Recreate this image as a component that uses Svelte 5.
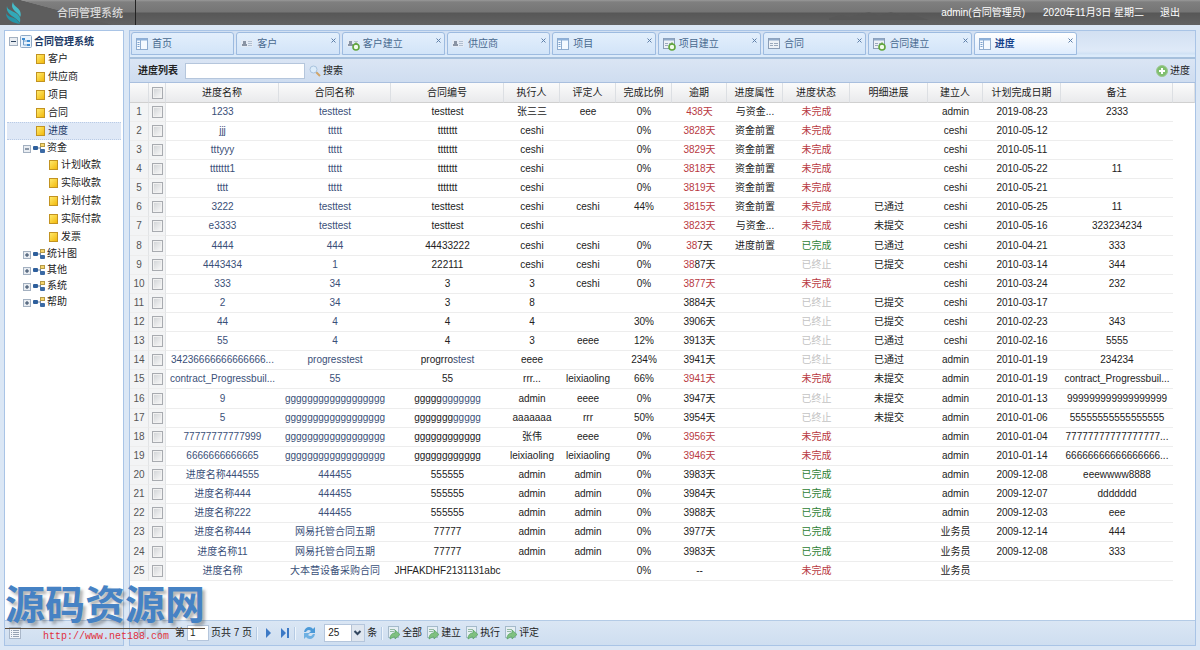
<script>
  const tabs = [
    { label: '首页', icon: 'pane', fixed: true },
    { label: '客户', icon: 'card' },
    { label: '客户建立', icon: 'cardAdd' },
    { label: '供应商', icon: 'card' },
    { label: '项目', icon: 'pane' },
    { label: '项目建立', icon: 'formAdd' },
    { label: '合同', icon: 'form' },
    { label: '合同建立', icon: 'formAdd' },
    { label: '进度', icon: 'pane', active: true }
  ];

  const tree = [
    { label: '客户', kind: 'leaf', depth: 1 },
    { label: '供应商', kind: 'leaf', depth: 1 },
    { label: '项目', kind: 'leaf', depth: 1 },
    { label: '合同', kind: 'leaf', depth: 1 },
    { label: '进度', kind: 'leaf', depth: 1, selected: true },
    { label: '资金', kind: 'folder', open: true },
    { label: '计划收款', kind: 'leaf', depth: 2 },
    { label: '实际收款', kind: 'leaf', depth: 2 },
    { label: '计划付款', kind: 'leaf', depth: 2 },
    { label: '实际付款', kind: 'leaf', depth: 2 },
    { label: '发票', kind: 'leaf', depth: 2 },
    { label: '统计图', kind: 'folder' },
    { label: '其他', kind: 'folder' },
    { label: '系统', kind: 'folder' },
    { label: '帮助', kind: 'folder' }
  ];

  const columns = [
    ['进度名称', 113], ['合同名称', 112], ['合同编号', 113], ['执行人', 56],
    ['评定人', 56], ['完成比例', 56], ['逾期', 55], ['进度属性', 56],
    ['进度状态', 67], ['明细进展', 78], ['建立人', 55], ['计划完成日期', 78], ['备注', 112]
  ];

  const W = '未完成', D = '已完成', S = '已终止';
  const g19 = 'g'.repeat(18);
  // A cell is a string, or a list of [text, colour class] pieces.
  const rows = [
    ['1233', 'testtest', 'testtest', '张三三', 'eee', '0%', '438天', '与资金...', W, '', 'admin', '2019-08-23', '2333'],
    ['jjj', 'ttttt', 'ttttttt', 'ceshi', '', '0%', '3828天', '资金前置', W, '', 'ceshi', '2010-05-12', ''],
    ['tttyyy', 'ttttt', 'ttttttt', 'ceshi', '', '0%', '3829天', '资金前置', W, '', 'ceshi', '2010-05-11', ''],
    ['ttttttt1', 'ttttt', 'ttttttt', 'ceshi', '', '0%', '3818天', '资金前置', W, '', 'ceshi', '2010-05-22', '11'],
    ['tttt', 'ttttt', 'ttttttt', 'ceshi', '', '0%', '3819天', '资金前置', W, '', 'ceshi', '2010-05-21', ''],
    ['3222', 'testtest', 'testtest', 'ceshi', 'ceshi', '44%', '3815天', '资金前置', W, '已通过', 'ceshi', '2010-05-25', '11'],
    ['e3333', 'testtest', 'testtest', 'ceshi', '', '', '3823天', '与资金...', W, '未提交', 'ceshi', '2010-05-16', '323234234'],
    ['4444', '444', '44433222', 'ceshi', 'ceshi', '0%', [['38', 'late'], ['7天', '']], '进度前置', D, '已通过', 'ceshi', '2010-04-21', '333'],
    ['4443434', '1', '222111', 'ceshi', 'ceshi', '0%', [['38', 'late'], ['87天', '']], '', S, '已提交', 'ceshi', '2010-03-14', '344'],
    ['333', '34', '3', '3', 'ceshi', '0%', '3877天', '', W, '', 'ceshi', '2010-03-24', '232'],
    ['2', '34', '3', '8', '', '', '3884天', '', S, '已提交', 'ceshi', '2010-03-17', ''],
    ['44', '4', '4', '4', '', '30%', '3906天', '', S, '已提交', 'ceshi', '2010-02-23', '343'],
    ['55', '4', '4', '3', 'eeee', '12%', '3913天', '', S, '已通过', 'ceshi', '2010-02-16', '5555'],
    ['34236666666666666...', 'progresstest', [['progrro', ''], ['stest', 'link']], 'eeee', '', '234%', '3941天', '', S, '已通过', 'admin', '2010-01-19', '234234'],
    ['contract_Progressbuil...', '55', '55', 'rrr...', 'leixiaoling', '66%', '3941天', '', W, '未提交', 'admin', '2010-01-19', 'contract_Progressbuil...'],
    ['9', g19, [['ggggg', ''], ['ggggggg', 'link']], 'admin', 'eeee', '0%', '3947天', '', S, '未提交', 'admin', '2010-01-13', '9'.repeat(18)],
    ['5', g19, [['ggggggg', ''], ['ggggg', 'link']], 'aaaaaaa', 'rrr', '50%', '3954天', '', S, '未提交', 'admin', '2010-01-06', '5'.repeat(17)],
    ['77777777777999', g19, 'gggggggggggg', '张伟', 'eeee', '0%', '3956天', '', W, '', 'admin', '2010-01-04', '7'.repeat(17) + '...'],
    ['6666666666665', g19, 'gggggggggggg', 'leixiaoling', 'leixiaoling', '0%', '3946天', '', W, '', 'admin', '2010-01-14', '6'.repeat(17) + '...'],
    ['进度名称444555', '444455', '555555', 'admin', 'admin', '0%', '3983天', '', D, '', 'admin', '2009-12-08', 'eeewwww8888'],
    ['进度名称444', '444455', '555555', 'admin', 'admin', '0%', '3984天', '', D, '', 'admin', '2009-12-07', 'ddddddd'],
    ['进度名称222', '444455', '555555', 'admin', 'admin', '0%', '3988天', '', D, '', 'admin', '2009-12-03', 'eee'],
    ['进度名称444', '网易托管合同五期', '77777', 'admin', 'admin', '0%', '3977天', '', D, '', '业务员', '2009-12-14', '444'],
    ['进度名称11', '网易托管合同五期', '77777', 'admin', 'admin', '0%', '3983天', '', D, '', '业务员', '2009-12-08', '333'],
    ['进度名称', '大本营设备采购合同', 'JHFAKDHF2131131abc', '', '', '0%', '--', '', W, '', '业务员', '', '']
  ];

  function tone(row, i) {
    if (i < 2) return 'link';
    if (i === 8) return row[8] === W ? 'late' : row[8] === D ? 'done' : 'stopped';
    if (i === 6 && row[8] === W && row[6] !== '--') return 'late';
    return '';
  }
</script>

{#snippet tabIcon(kind)}
  <svg width="14" height="14" viewBox="0 0 14 14" aria-hidden="true">
    {#if kind === 'pane'}
      <rect x="1.500" y="1.500" width="11" height="11" fill="#f4f9ff" stroke="#8faccf" />
      <path d="M2 2.500h10" stroke="#8db1da" stroke-width="2" />
      <path d="M5.500 3v9" stroke="#8faccf" />
      <path d="M2.500 5.500h2M2.500 7.500h2M2.500 9.500h2" stroke="#7ba0cc" />
    {:else if kind === 'card' || kind === 'cardAdd'}
      <rect x="1" y="3" width="12" height="7" fill="#e4ebf5" />
      <path d="M3 4h3v3H3zM2 7h5v2H2z" fill="#8a94a4" />
      <path d="M8 4.500h4M8 6.500h4M8 8.500h4" stroke="#b1bfd0" />
    {:else}
      <rect x="1.500" y="1.500" width="11" height="10" fill="#edf1f6" stroke="#8b9db5" />
      <path d="M2 2.500h10" stroke="#8fa9c9" stroke-width="2" />
      <path d="M3 6.500h3M7 6.500h4M3 8.500h3M7 8.500h4" stroke="#9aa9bc" />
    {/if}
    {#if kind.endsWith('Add')}
      <circle cx="10" cy="10" r="3" fill="#f2fbeb" stroke="#61a53c" stroke-width="1.600" />
      <path d="M10 5.500v2" stroke="#61a53c" stroke-width="1.500" />
    {/if}
  </svg>
{/snippet}

{#snippet sheetIcon()}
  <svg width="14" height="14" viewBox="0 0 14 14" aria-hidden="true">
    <rect x="1.500" y=".5" width="10" height="11" fill="#e6eff4" stroke="#a5bacb" />
    <path d="M3 3.500h5M3 5.500h4" stroke="#93b8a2" />
    <path d="M3 13c0-5 3-6 5-6V4l5 4.500L8 13v-2c-2 0-3 1-5 2z" fill="#7fc080" stroke="#4f9a5b" stroke-width=".6" />
  </svg>
{/snippet}

<div class="app">
  <header>
    <div class="brand">
      <svg class="logo" width="18" height="22" viewBox="0 0 18 22" aria-hidden="true">
        <path d="M8 0c0 4 5 5 7 9 1 3 1 5 0 6C14 10 4 8 8 0z" fill="#45bcc9" />
        <path d="M2 4c0 5 9 5 12 10 2 3 1 5 1 7C12 15 0 13 2 4z" fill="#31a9b8" />
        <path d="M1 11c1 4 8 4 11 7l3 4C8 21 1 18 1 11z" fill="#2495a8" />
      </svg>
      <span>合同管理系统</span>
    </div>
    <svg class="ridge" width="100" height="9" viewBox="0 0 100 9" aria-hidden="true">
      <path d="M0 7l12-3 8 2L40 1l10 4 12-4 10 4 10-2 18 6H0z" fill="#575757" opacity=".7" />
    </svg>
    <span class="user">admin(合同管理员)</span>
    <span class="date">2020年11月3日 星期二</span>
    <a href="#logout">退出</a>
  </header>

  <div class="workspace">
    <aside>
      <nav aria-label="合同管理系统">
        <div class="node root">
          <svg width="9" height="9" viewBox="0 0 9 9" aria-hidden="true"><rect x=".5" y=".5" width="8" height="8" fill="#e9edf2" stroke="#a3b0c0" /><path d="M2 4.500h5" stroke="#2f4560" /></svg>
          <svg width="12" height="13" viewBox="0 0 12 13" aria-hidden="true"><rect x=".5" y=".5" width="11" height="12" rx="1" fill="#eaf3fc" stroke="#8fa9c6" /><path d="M2 3h3v2H2zM7 5h3v2H7zM7 9h3v2H7z" fill="#3b8ad0" /><path d="M3.500 5v5H7M3.500 6H7" fill="none" stroke="#6f9cc9" /></svg>
          <a href="#root">合同管理系统</a>
        </div>
        {#each tree as item}
          <div class="node {item.kind} d{item.depth ?? 0}" class:selected={item.selected}>
            {#if item.kind === 'leaf'}
              <i class="file"></i>
            {:else}
              <svg width="8" height="9" viewBox="0 0 8 9" aria-hidden="true"><rect x=".5" y="1.500" width="7" height="7" fill="#e9edf2" stroke="#a3b0c0" /><path d={item.open ? 'M2 5h4' : 'M2 5h4M4 3v4'} stroke="#2f4560" /></svg>
              <svg width="12" height="11" viewBox="0 0 12 11" aria-hidden="true"><path d="M4 5h3M7.500 2.500v6" stroke="#7288a2" fill="none" /><rect x="0" y="3" width="5" height="4" rx="1" fill="#2e5f9c" /><rect x="7.500" y=".5" width="4" height="3" fill="#f7d66e" stroke="#b59a46" /><rect x="7" y="6" width="5" height="4" rx="1" fill="#3b6aa5" /></svg>
            {/if}
            <a href="#{item.label}">{item.label}</a>
          </div>
        {/each}
      </nav>
      <div class="bar">
        <svg width="12" height="12" viewBox="0 0 12 12" aria-hidden="true"><rect x=".5" y=".5" width="11" height="11" fill="#f3f6fa" stroke="#a9b7c9" /><path d="M2 3.500h1M4 3.500h6M2 5.500h1M4 5.500h6M2 7.500h1M4 7.500h6M2 9.500h1M4 9.500h6" stroke="#97a3b3" /></svg>
      </div>
    </aside>

    <main>
      <div class="tabstrip">
        <div class="tabs">
          {#each tabs as tab}
            <div class="tab" class:active={tab.active}>
              <button class="name">{@render tabIcon(tab.icon)}{tab.label}</button>
              {#if !tab.fixed}
                <button class="close" aria-label="关闭{tab.label}"><svg width="5" height="5" viewBox="0 0 5 5"><path d="M.5 .5l4 4M4.500 .5l-4 4" stroke="#5e7fa8" /></svg></button>
              {/if}
            </div>
          {/each}
        </div>
      </div>

      <div class="toolbar">
        <label for="search">进度列表</label>
        <input id="search" type="text" />
        <button>
          <svg width="12" height="12" viewBox="0 0 12 12" aria-hidden="true"><path d="M7 7l4 4" stroke="#d0a468" stroke-width="2" /><circle cx="4.500" cy="4.500" r="3.500" fill="#dcecfa" stroke="#a9c3de" /></svg>
          搜索
        </button>
        <button class="add">
          <svg width="12" height="12" viewBox="0 0 12 12" aria-hidden="true"><circle cx="6" cy="6" r="5.500" fill="#80bf6f" stroke="#9cc790" /><path d="M6 3v6M3 6h6" stroke="#fff" stroke-width="2" /></svg>
          进度
        </button>
      </div>

      <div class="grid">
        <table>
          <colgroup>
            <col style="width:19px" /><col style="width:17px" />
            {#each columns as [, w]}<col style="width:{w}px" />{/each}
            <col style="width:22px" />
          </colgroup>
          <thead>
            <tr>
              <th></th>
              <th><input type="checkbox" aria-label="全选" /></th>
              {#each columns as [name]}<th>{name}</th>{/each}
              <th></th>
            </tr>
          </thead>
          <tbody>
            {#each rows as row, r}
              <tr>
                <td class="num">{r + 1}</td>
                <td class="pick"><input type="checkbox" aria-label="选择第{r + 1}行" /></td>
                {#each row as cell, i}
                  <td class={tone(row, i)}>{#if Array.isArray(cell)}{#each cell as [text, c]}<span class={c}>{text}</span>{/each}{:else}{cell}{/if}</td>
                {/each}
                <td class="tail"></td>
              </tr>
            {/each}
          </tbody>
        </table>
      </div>

      <div class="bar pager">
        <button aria-label="首页" disabled><svg width="10" height="10" viewBox="0 0 10 10"><path d="M1 0h2v10H1zM9 0v10L4 5z" fill="#b5bfcd" /></svg></button>
        <button aria-label="上一页" disabled><svg width="7" height="10" viewBox="0 0 7 10"><path d="M6 0v10L1 5z" fill="#b5bfcd" /></svg></button>
        <label class="page">第<input type="text" value="1" />页共 7 页</label>
        <i class="sep"></i>
        <button aria-label="下一页"><svg width="7" height="10" viewBox="0 0 7 10"><path d="M1 0v10l5-5z" fill="#3c79c5" /></svg></button>
        <button aria-label="末页"><svg width="10" height="10" viewBox="0 0 10 10"><path d="M1 0v10l5-5zM7 0h2v10H7z" fill="#3c79c5" /></svg></button>
        <i class="sep"></i>
        <button aria-label="刷新"><svg width="13" height="12" viewBox="0 0 13 12"><path d="M1 5c1-6 7-6 9-3l2-2v6H6l2-2C6 2 4 3 3 5z" fill="#4c9ad8" /><path d="M12 7c-1 6-7 6-9 3l-2 2V6h6L5 8c2 2 4 1 5-1z" fill="#6eb0e2" /></svg></button>
        <span class="size">
          <select id="size" aria-label="每页条数"><option>25</option><option>50</option></select>
          <svg width="13" height="16" viewBox="0 0 13 16" aria-hidden="true"><rect width="13" height="16" fill="#dfe6ef" /><path d="M.5 0v16" stroke="#b5c2d3" /><path d="M3.500 6l3 3 3-3" fill="none" stroke="#33475f" stroke-width="2" /></svg>
        </span>
        <label for="size">条</label>
        <i class="sep"></i>
        <div class="filters">
          {#each ['全部', '建立', '执行', '评定'] as name}
            <button>{@render sheetIcon()}{name}</button>
          {/each}
        </div>
      </div>
    </main>
  </div>

  <div class="stamp">
    <strong>源码资源网</strong>
    <span>http://www.net188.com</span>
  </div>
</div>

<style>
  :global(body) { margin: 0; background: #dbe7f5; }
  .app {
    position: relative;
    box-sizing: border-box;
    min-height: 100vh;
    display: flex;
    flex-direction: column;
    font: 10px/14px "Liberation Sans", "Noto Sans CJK SC", sans-serif;
    color: #222;
  }
  button, input, select { font: inherit; color: inherit; }
  button { border: 0; padding: 0; background: none; display: flex; align-items: center; gap: 2px; white-space: nowrap; }
  a { color: inherit; text-decoration: none; }
  svg { flex: none; display: block; }

  header {
    display: flex;
    align-items: center;
    height: 25px;
    padding-right: 20px;
    color: #fff;
    background: linear-gradient(#999 0, #7f7f7f 2px, #757575 12px, #575757 13px, #626262 100%);
  }
  .brand {
    align-self: stretch;
    width: 130px;
    padding-left: 5px;
    display: flex;
    align-items: center;
    gap: 34px;
    border-right: 1px solid #222;
    font-size: 11px;
    font-weight: 500;
    color: #d8d8d8;
    background: linear-gradient(195deg, transparent 50%, #5d5d5d 51%);
  }
  .ridge { margin: 6px 12px 0 auto; }
  .date { margin: 0 16px 0 18px; }

  .workspace { flex: 1; display: flex; gap: 5px; padding: 5px 4px 4px; }
  aside, main { display: flex; flex-direction: column; border: 1px solid #a9c4e6; background: #fff; }
  aside { flex: none; width: 118px; }
  main { flex: 1; min-width: 0; }
  nav { flex: 1; padding: 2px 2px 0; }
  .node { display: flex; align-items: center; height: 18px; gap: 2px; box-sizing: border-box; }
  .root { height: 17px; padding-left: 2px; font-weight: 700; color: #1c3a66; }
  .folder { height: 16px; padding-left: 16px; }
  .d1 { padding-left: 29px; }
  .d2 { padding-left: 42px; }
  .leaf { gap: 3px; }
  .selected { background: #dfe8f6; border: 1px dotted #b9cbe6; border-width: 1px 0; color: #1c3a66; }
  .file { width: 7px; height: 8px; border: 1px solid #c29321; background: linear-gradient(135deg, #ffe96a, #f2b90d); }

  .bar {
    height: 24px;
    display: flex;
    align-items: center;
    padding-left: 4px;
    border-top: 1px solid #b4cbe6;
    background: linear-gradient(#dae6f4, #cedef0);
  }
  .tabstrip { padding: 1px 1px 2px; background: linear-gradient(#d2e0f2, #dfeaf8 20px, #cfe1f4 23px, #dcebfa 24px); border-bottom: 2px solid #a6c0dc; }
  .tabs { width: 89%; display: grid; grid-template-columns: repeat(9, 1fr); gap: 2px; }
  .tab {
    display: flex;
    justify-content: space-between;
    align-items: flex-start;
    height: 21px;
    padding: 0 3px;
    border: 1px solid #9dbbe0;
    border-radius: 3px 3px 0 0;
    background: linear-gradient(#e3effc, #d2e4f8);
    color: #48698f;
  }
  .active { background: linear-gradient(#fff, #deecfd); color: #15428b; font-weight: 700; }
  .name { height: 22px; gap: 3px; }
  .close { padding-top: 5px; }

  .toolbar { display: flex; align-items: center; height: 23px; padding: 0 5px 0 8px; background: linear-gradient(#dae5f4, #cfddf0); border-bottom: 1px solid #a9bfde; }
  .toolbar label { font-weight: 700; margin-right: 7px; }
  .toolbar input { width: 112px; height: 14px; padding: 0 3px; border: 1px solid #b5c6dc; background: #fff; margin-right: 4px; }
  .add { margin-left: auto; }

  .grid { flex: 1; background: #fff; }
  table { width: 100%; table-layout: fixed; border-collapse: separate; border-spacing: 0; }
  th, td { padding: 0; text-align: center; white-space: nowrap; overflow: hidden; }
  th { height: 19px; font-weight: 400; background: linear-gradient(#fbfbfb, #e9eaec); border-bottom: 1px solid #d0d0d0; border-right: 1px solid #dcdfe3; }
  td { height: 18px; border-bottom: 1px solid #ededed; }
  tbody tr:nth-child(8n) td { height: 19px; }
  td.tail { border-bottom-color: #fff; }
  .num, .pick { background: #f3f4f5; border-right: 1px solid #e2e4e6; color: #555; }
  input[type='checkbox'] { appearance: none; display: block; box-sizing: border-box; width: 11px; height: 12px; margin: 0 auto; border: 1px solid #a8abb0; background: linear-gradient(135deg, #cfd2d5, #fafafa); box-shadow: inset 0 0 0 1px #f1f1f1; }
  .link { color: #3a4f78; }
  .late { color: #b8393f; }
  .done { color: #2d8134; }
  .stopped { color: #c3c3c3; }

  .pager { gap: 8px; padding-left: 7px; }
  .page { display: flex; align-items: center; gap: 2px; margin-left: 5px; }
  .page input { width: 16px; height: 14px; padding: 0 2px; border: 1px solid #b5c6dc; background: #fff; }
  .sep { width: 1px; height: 13px; background: #b6cbe4; margin: 0 -4px; border-right: 1px solid #eef5fc; }
  .sep + button { margin-left: 3px; }
  .size { position: relative; display: flex; }
  .size select { appearance: none; width: 41px; height: 18px; padding: 0 3px; border: 1px solid #b5c6dc; border-radius: 0; background: #fff; }
  .size svg { position: absolute; right: 1px; top: 1px; pointer-events: none; }
  .size + label { margin-left: -6px; }
  .filters { display: flex; gap: 4px; }
  .filters button { gap: 1px; }

  .stamp { position: absolute; left: 5px; bottom: 5px; width: 200px; display: flex; flex-direction: column; pointer-events: none; }
  .stamp strong { font-size: 40px; line-height: 46px; color: #4682c4; border-bottom: 1px solid #5a4a3a; text-shadow: 3px 3px 3px rgba(90, 90, 90, .45); }
  .stamp span { padding-left: 38px; line-height: 16px; font-family: "Liberation Mono", monospace; color: #e0313d; }
</style>
